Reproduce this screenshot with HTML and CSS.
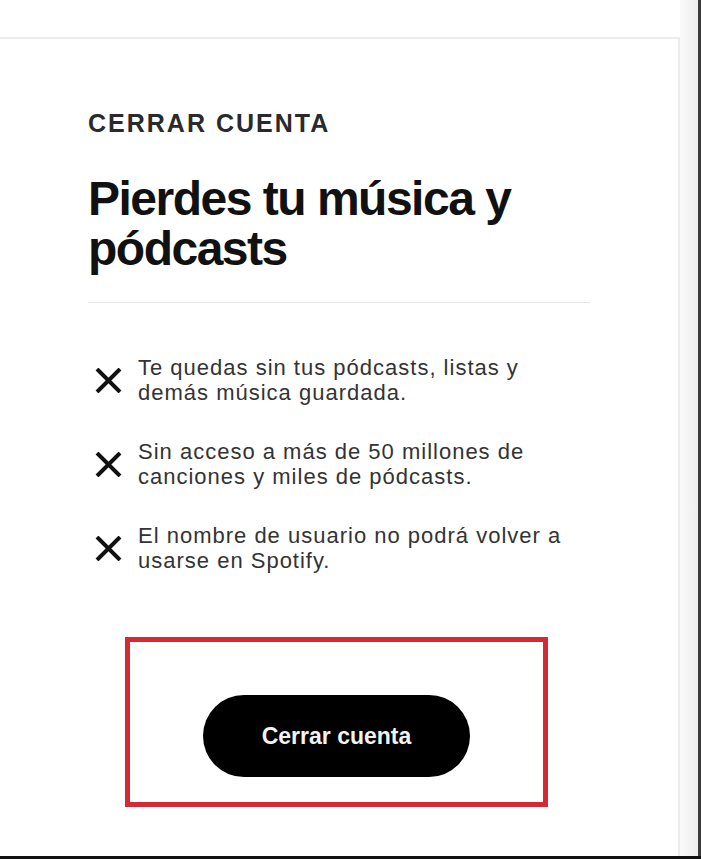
FILE: index.html
```html
<!doctype html>
<html>
    <head>
        <link rel="stylesheet" href="styles.css">
    </head>
    <body>
        <div class="page">
            <main class="main">
                <section class="card">
                    <p class="eyebrow">CERRAR CUENTA</p>
                    <h1 class="title">Pierdes tu música y pódcasts</h1>
                    <hr class="divider" />

                    <ul class="losses">
                        <li>
                            <svg class="cross" viewBox="0 0 27 25">
                                <path d="M2 1 L25 24 M25 1 L2 24" />
                            </svg>
                            <span>Te quedas sin tus pódcasts, listas y demás música guardada.</span>
                        </li>
                        <li>
                            <svg class="cross" viewBox="0 0 27 25">
                                <path d="M2 1 L25 24 M25 1 L2 24" />
                            </svg>
                            <span>Sin acceso a más de 50 millones de canciones y miles de pódcasts.</span>
                        </li>
                        <li>
                            <svg class="cross" viewBox="0 0 27 25">
                                <path d="M2 1 L25 24 M25 1 L2 24" />
                            </svg>
                            <span>El nombre de usuario no podrá volver a usarse en Spotify.</span>
                        </li>
                    </ul>

                    <!-- highlighted action -->
                    <div class="highlight">
                        <button type="button" class="close-btn">Cerrar cuenta</button>
                    </div>
                </section>
            </main>
            <div class="gutter"></div>
            <div class="edge"></div>
        </div>
    </body>
</html>
```

FILE: styles.css
```css
html {
    margin: 0;
    height: 100%;
}
body {
    margin: 0;
    padding: 0;
    background: #fff;
    font-family: "Liberation Sans", Arial, sans-serif;
    color: #222;
}
.page {
    display: flex;
    height: 859px;
    box-sizing: border-box;
    border-bottom: 3px solid #111;
}
.main {
    width: 680px;
    padding-top: 37px;
    box-sizing: border-box;
}
.card {
    height: 100%;
    box-sizing: border-box;
    border-top: 2px solid #ececec;
    border-right: 2px solid #ececec;
    padding: 70px 0 0 88px;
}
.gutter {
    width: 18px;
    background: linear-gradient(to right, #fafafa, #ededed);
}
.edge {
    width: 3px;
    background: #3a3a3a;
}

.eyebrow {
    margin: 0;
    font-size: 25px;
    line-height: 28px;
    font-weight: bold;
    letter-spacing: 2px;
    color: #2a2a2a;
}
.title {
    margin: 37px 0 0;
    width: 480px;
    font-size: 48px;
    line-height: 50px;
    font-weight: bold;
    letter-spacing: -1.5px;
    color: #111;
}
.divider {
    margin: 28px 0 0;
    width: 502px;
    border: 0;
    border-top: 1px solid #e6e6e6;
}

.losses {
    list-style: none;
    margin: 52px 0 0;
    padding: 0;
}
.losses li {
    display: flex;
    align-items: center;
    gap: 16px;
    margin-bottom: 34px;
    font-size: 22px;
    line-height: 25px;
    letter-spacing: 1px;
    color: #333;
}
.losses li:last-child {
    margin-bottom: 0;
}
.losses span {
    width: 440px;
}
.cross {
    flex: none;
    width: 27px;
    height: 25px;
    margin-left: 7px;
}
.cross path {
    stroke: #111;
    stroke-width: 4;
    fill: none;
}

.highlight {
    display: flex;
    justify-content: center;
    width: 423px;
    height: 170px;
    box-sizing: border-box;
    margin: 64px 0 0 37px;
    padding-top: 53px;
    border: 5px solid #d42a35;
}
.close-btn {
    width: 267px;
    height: 82px;
    border: 0;
    border-radius: 41px;
    background: #000;
    color: #f2f2f2;
    font-family: "Liberation Sans", Arial, sans-serif;
    font-size: 23px;
    font-weight: bold;
}
```
